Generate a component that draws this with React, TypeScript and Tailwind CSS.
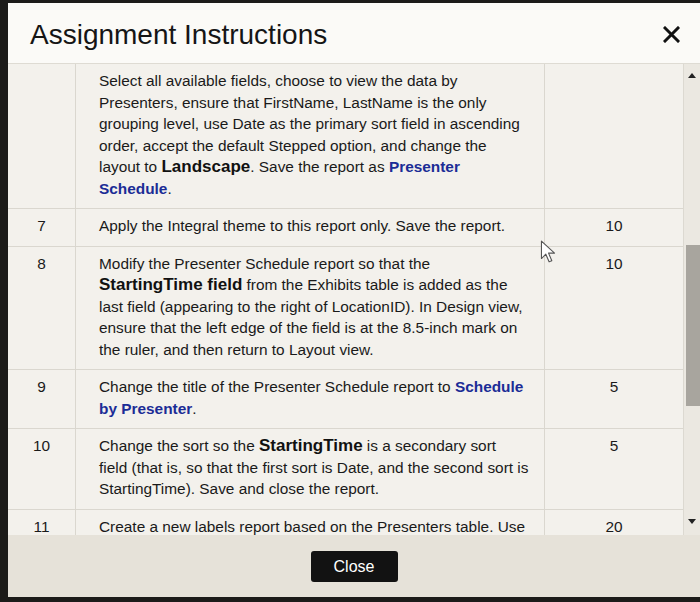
import React from 'react';

type Row = {
  num: string;
  points: string;
  lines: React.ReactNode[];
};

const Blue: React.FC<{ children: React.ReactNode }> = ({ children }) => (
  <span className="font-bold text-[#1b2c96]">{children}</span>
);

const Big: React.FC<{ children: React.ReactNode }> = ({ children }) => (
  <span className="font-bold text-[17px] leading-none text-[#111]">{children}</span>
);

const rows: Row[] = [
  {
    num: '',
    points: '',
    lines: [
      'Select all available fields, choose to view the data by',
      'Presenters, ensure that FirstName, LastName is the only',
      'grouping level, use Date as the primary sort field in ascending',
      'order, accept the default Stepped option, and change the',
      <>layout to <Big>Landscape</Big>. Save the report as <Blue>Presenter</Blue></>,
      <><Blue>Schedule</Blue>.</>,
    ],
  },
  {
    num: '7',
    points: '10',
    lines: ['Apply the Integral theme to this report only. Save the report.'],
  },
  {
    num: '8',
    points: '10',
    lines: [
      'Modify the Presenter Schedule report so that the',
      <><Big>StartingTime field</Big> from the Exhibits table is added as the</>,
      'last field (appearing to the right of LocationID). In Design view,',
      'ensure that the left edge of the field is at the 8.5-inch mark on',
      'the ruler, and then return to Layout view.',
    ],
  },
  {
    num: '9',
    points: '5',
    lines: [
      <>Change the title of the Presenter Schedule report to <Blue>Schedule</Blue></>,
      <><Blue>by Presenter</Blue>.</>,
    ],
  },
  {
    num: '10',
    points: '5',
    lines: [
      <>Change the sort so the <Big>StartingTime</Big> is a secondary sort</>,
      'field (that is, so that the first sort is Date, and the second sort is',
      'StartingTime). Save and close the report.',
    ],
  },
  {
    num: '11',
    points: '20',
    lines: ['Create a new labels report based on the Presenters table. Use'],
  },
];

export default function App() {
  return (
    <div className="w-[700px] h-[602px] bg-[#1c1b19] pl-[8px] pt-[3px] pb-[5px] flex font-['Liberation_Sans',Arial,sans-serif] text-[#1a1a1a]">
      <div className="relative flex-1 flex flex-col bg-[#f3f1ec]">
        {/* Header */}
        <div className="h-[61px] shrink-0 flex items-center justify-between pl-[22px] pr-[20px] pt-[3px] bg-[#fbfaf7] border-b border-[#dedbd3]">
          <h1 className="text-[28px] leading-none text-[#151515]">Assignment Instructions</h1>
          <svg width="17" height="17" viewBox="0 0 17 17">
            <path d="M2 2 L15 15 M15 2 L2 15" stroke="#111" strokeWidth="3" strokeLinecap="square" />
          </svg>
        </div>

        {/* Table + scrollbar */}
        <div className="h-[471px] shrink-0 flex">
          <div className="w-[675px] overflow-hidden">
            {rows.map((row, i) => (
              <div key={i} className="flex border-b border-[#dad7cf] text-[15.4px] leading-[21.5px]">
                <div className="w-[67px] shrink-0 text-center pt-[6px] pb-[9px]">{row.num}</div>
                <div className="w-[470px] shrink-0 border-l border-r border-[#dad7cf] pl-[23px] pr-[10px] pt-[6px] pb-[9px] whitespace-nowrap">
                  {row.lines.map((line, j) => (
                    <div key={j}>{line}</div>
                  ))}
                </div>
                <div className="flex-1 text-center pt-[6px] pb-[9px]">{row.points}</div>
              </div>
            ))}
          </div>
          <div className="w-[17px] shrink-0 flex flex-col items-center bg-[#ebe8e1] border-l border-[#dcd9d1]">
            <svg width="8" height="5" viewBox="0 0 8 5" className="mt-[9px]">
              <path d="M0 5 L4 0 L8 5 Z" fill="#222" />
            </svg>
            <div className="mt-[167px] w-[14px] h-[161px] bg-[#a8a59e] self-end" />
            <svg width="8" height="5" viewBox="0 0 8 5" className="mt-[113px]">
              <path d="M0 0 L8 0 L4 5 Z" fill="#222" />
            </svg>
          </div>
        </div>

        {/* Footer */}
        <div className="flex-1 flex items-center justify-center bg-[#e6e2d9] pt-[1px]">
          <button className="w-[87px] h-[31px] rounded-[3px] bg-[#121212] text-white text-[16px]">
            Close
          </button>
        </div>

        {/* mouse pointer */}
        <svg width="16" height="24" viewBox="0 0 14 22" className="absolute left-[532px] top-[237px]">
          <path d="M1 1 L1 17 L5 13 L8 20 L10.5 19 L7.5 12 L13 12 Z" fill="#fff" stroke="#555" strokeWidth="1" strokeLinejoin="round" />
        </svg>
      </div>
    </div>
  );
}
